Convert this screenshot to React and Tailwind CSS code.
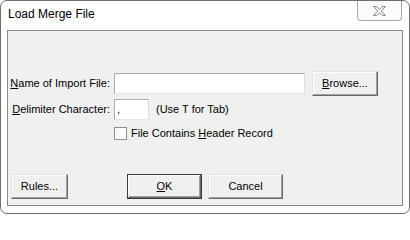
import React from "react";

const font = { fontFamily: "'Liberation Sans', Arial, sans-serif" };

const Btn = ({ children, primary, className = "" }) => (
  <button
    className={
      "flex items-center justify-center h-[25px] bg-[#f0f0f0] text-[11px] text-black whitespace-nowrap " +
      (primary
        ? "border border-[#3a3a3a] shadow-[inset_-1px_-1px_#696969,inset_1px_1px_#ffffff,inset_-2px_-2px_#a0a0a0] "
        : "border border-t-[#e3e3e3] border-l-[#e3e3e3] border-r-[#696969] border-b-[#696969] shadow-[inset_-1px_-1px_#a0a0a0,inset_1px_1px_#ffffff] ") +
      className
    }
  >
    {children}
  </button>
);

const TextBox = ({ value, className = "" }) => (
  <div
    className={
      "h-[21px] bg-white border border-t-[#abadb3] border-l-[#abadb3] border-r-[#dbdfe6] border-b-[#e3e9ef] text-[11px] leading-[19px] pl-[2px] " +
      className
    }
  >
    {value}
  </div>
);

export default function App() {
  return (
    <div
      style={font}
      className="w-[410px] h-[214px] bg-white border border-[#6e6e6e] rounded-[7px] flex flex-col text-black overflow-hidden whitespace-nowrap"
    >
      {/* title bar */}
      <div className="h-[29px] shrink-0 flex justify-between">
        <div className="pl-[7px] pt-[6px] text-[12px] leading-[15px]">Load Merge File</div>
        <div className="mr-[7px] w-[45px] h-[20px] border border-t-0 border-[#a9a9a9] rounded-b-[4px] bg-[#fbfbfb] flex items-center justify-center">
          <svg width="13" height="10" viewBox="0 0 13 10">
            <path
              d="M0.5 0.5 H3.5 L6.5 3.3 L9.5 0.5 H12.5 L8.3 5 L12.5 9.5 H9.5 L6.5 6.7 L3.5 9.5 H0.5 L4.7 5 Z"
              fill="#fdfdfd"
              stroke="#8a8a8a"
              strokeWidth="1"
            />
          </svg>
        </div>
      </div>

      {/* client area */}
      <div className="mx-[6px] mb-[7px] flex-1 bg-[#f0f0f0] border border-[#8a8a8a] flex flex-col text-[11px]">
        <div className="mt-[40px] flex items-center h-[24px]">
          <div className="w-[102px] text-right">
            <u>N</u>ame of Import File:
          </div>
          <TextBox className="ml-[4px] w-[191px]" />
          <Btn className="ml-[7px] w-[66px] h-[24px]">
            <u>B</u>rowse...
          </Btn>
        </div>

        <div className="mt-[4px] flex items-center h-[21px]">
          <div className="w-[102px] text-right">
            <u>D</u>elimiter Character:
          </div>
          <TextBox className="ml-[4px] w-[35px]" value="," />
          <div className="ml-[7px]">(Use T for Tab)</div>
        </div>

        <div className="mt-[7px] flex items-center h-[13px] pl-[106px]">
          <div className="w-[13px] h-[13px] border border-[#8e8f8f] bg-gradient-to-br from-[#f4f4f4] to-[#ffffff]" />
          <div className="ml-[4px]">
            File Contains <u>H</u>eader Record
          </div>
        </div>

        <div className="mt-[34px] flex items-center">
          <Btn className="ml-[3px] w-[57px]">Rules...</Btn>
          <Btn primary className="ml-[59px] w-[75px]">
            <u>O</u>K
          </Btn>
          <Btn className="ml-[6px] w-[75px]">Cancel</Btn>
        </div>
      </div>
    </div>
  );
}
